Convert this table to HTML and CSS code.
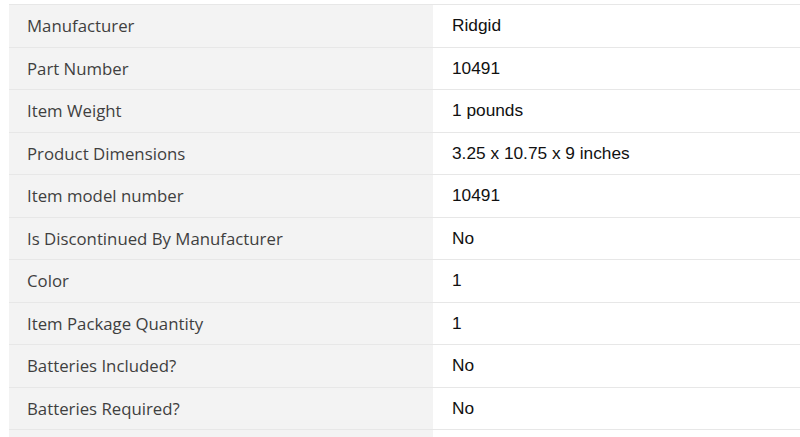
FILE: index.html
```html
<!DOCTYPE html>
<html>
<head>
<meta charset="utf-8">
<link rel="stylesheet" href="styles.css">
</head>
<body>
<table class="specs">
<tbody>
<tr><th>Manufacturer</th><td>Ridgid</td></tr>
<tr><th>Part Number</th><td>10491</td></tr>
<tr><th>Item Weight</th><td>1 pounds</td></tr>
<tr><th>Product Dimensions</th><td>3.25 x 10.75 x 9 inches</td></tr>
<tr><th>Item model number</th><td>10491</td></tr>
<tr><th>Is Discontinued By Manufacturer</th><td>No</td></tr>
<tr><th>Color</th><td>1</td></tr>
<tr><th>Item Package Quantity</th><td>1</td></tr>
<tr><th>Batteries Included?</th><td>No</td></tr>
<tr><th>Batteries Required?</th><td>No</td></tr>
<tr><th>&nbsp;</th><td>&nbsp;</td></tr>
</tbody>
</table>
</body>
</html>
```
FILE: styles.css
```css
html, body {
  margin: 0;
  padding: 0;
  background: #fff;
  overflow: hidden;
}
body {
  padding: 4px 0 0 9px;
}
.specs {
  border-collapse: collapse;
  width: 820px;
  table-layout: fixed;
}
.specs tr {
  height: 42.5px;
}
.specs th,
.specs td {
  border-top: 1px solid #e7e7e7;
  padding: 0;
  vertical-align: middle;
  text-align: left;
  font-weight: normal;
}
.specs th {
  width: 424px;
  background: #f3f3f3;
  padding-left: 18px;
  box-sizing: border-box;
  font-family: "Open Sans", sans-serif;
  font-size: 16.8px;
  color: #3f3f3f;
}
.specs td {
  padding-left: 19px;
  font-family: "Liberation Sans", Arial, sans-serif;
  font-size: 17.3px;
  color: #111;
}
```
